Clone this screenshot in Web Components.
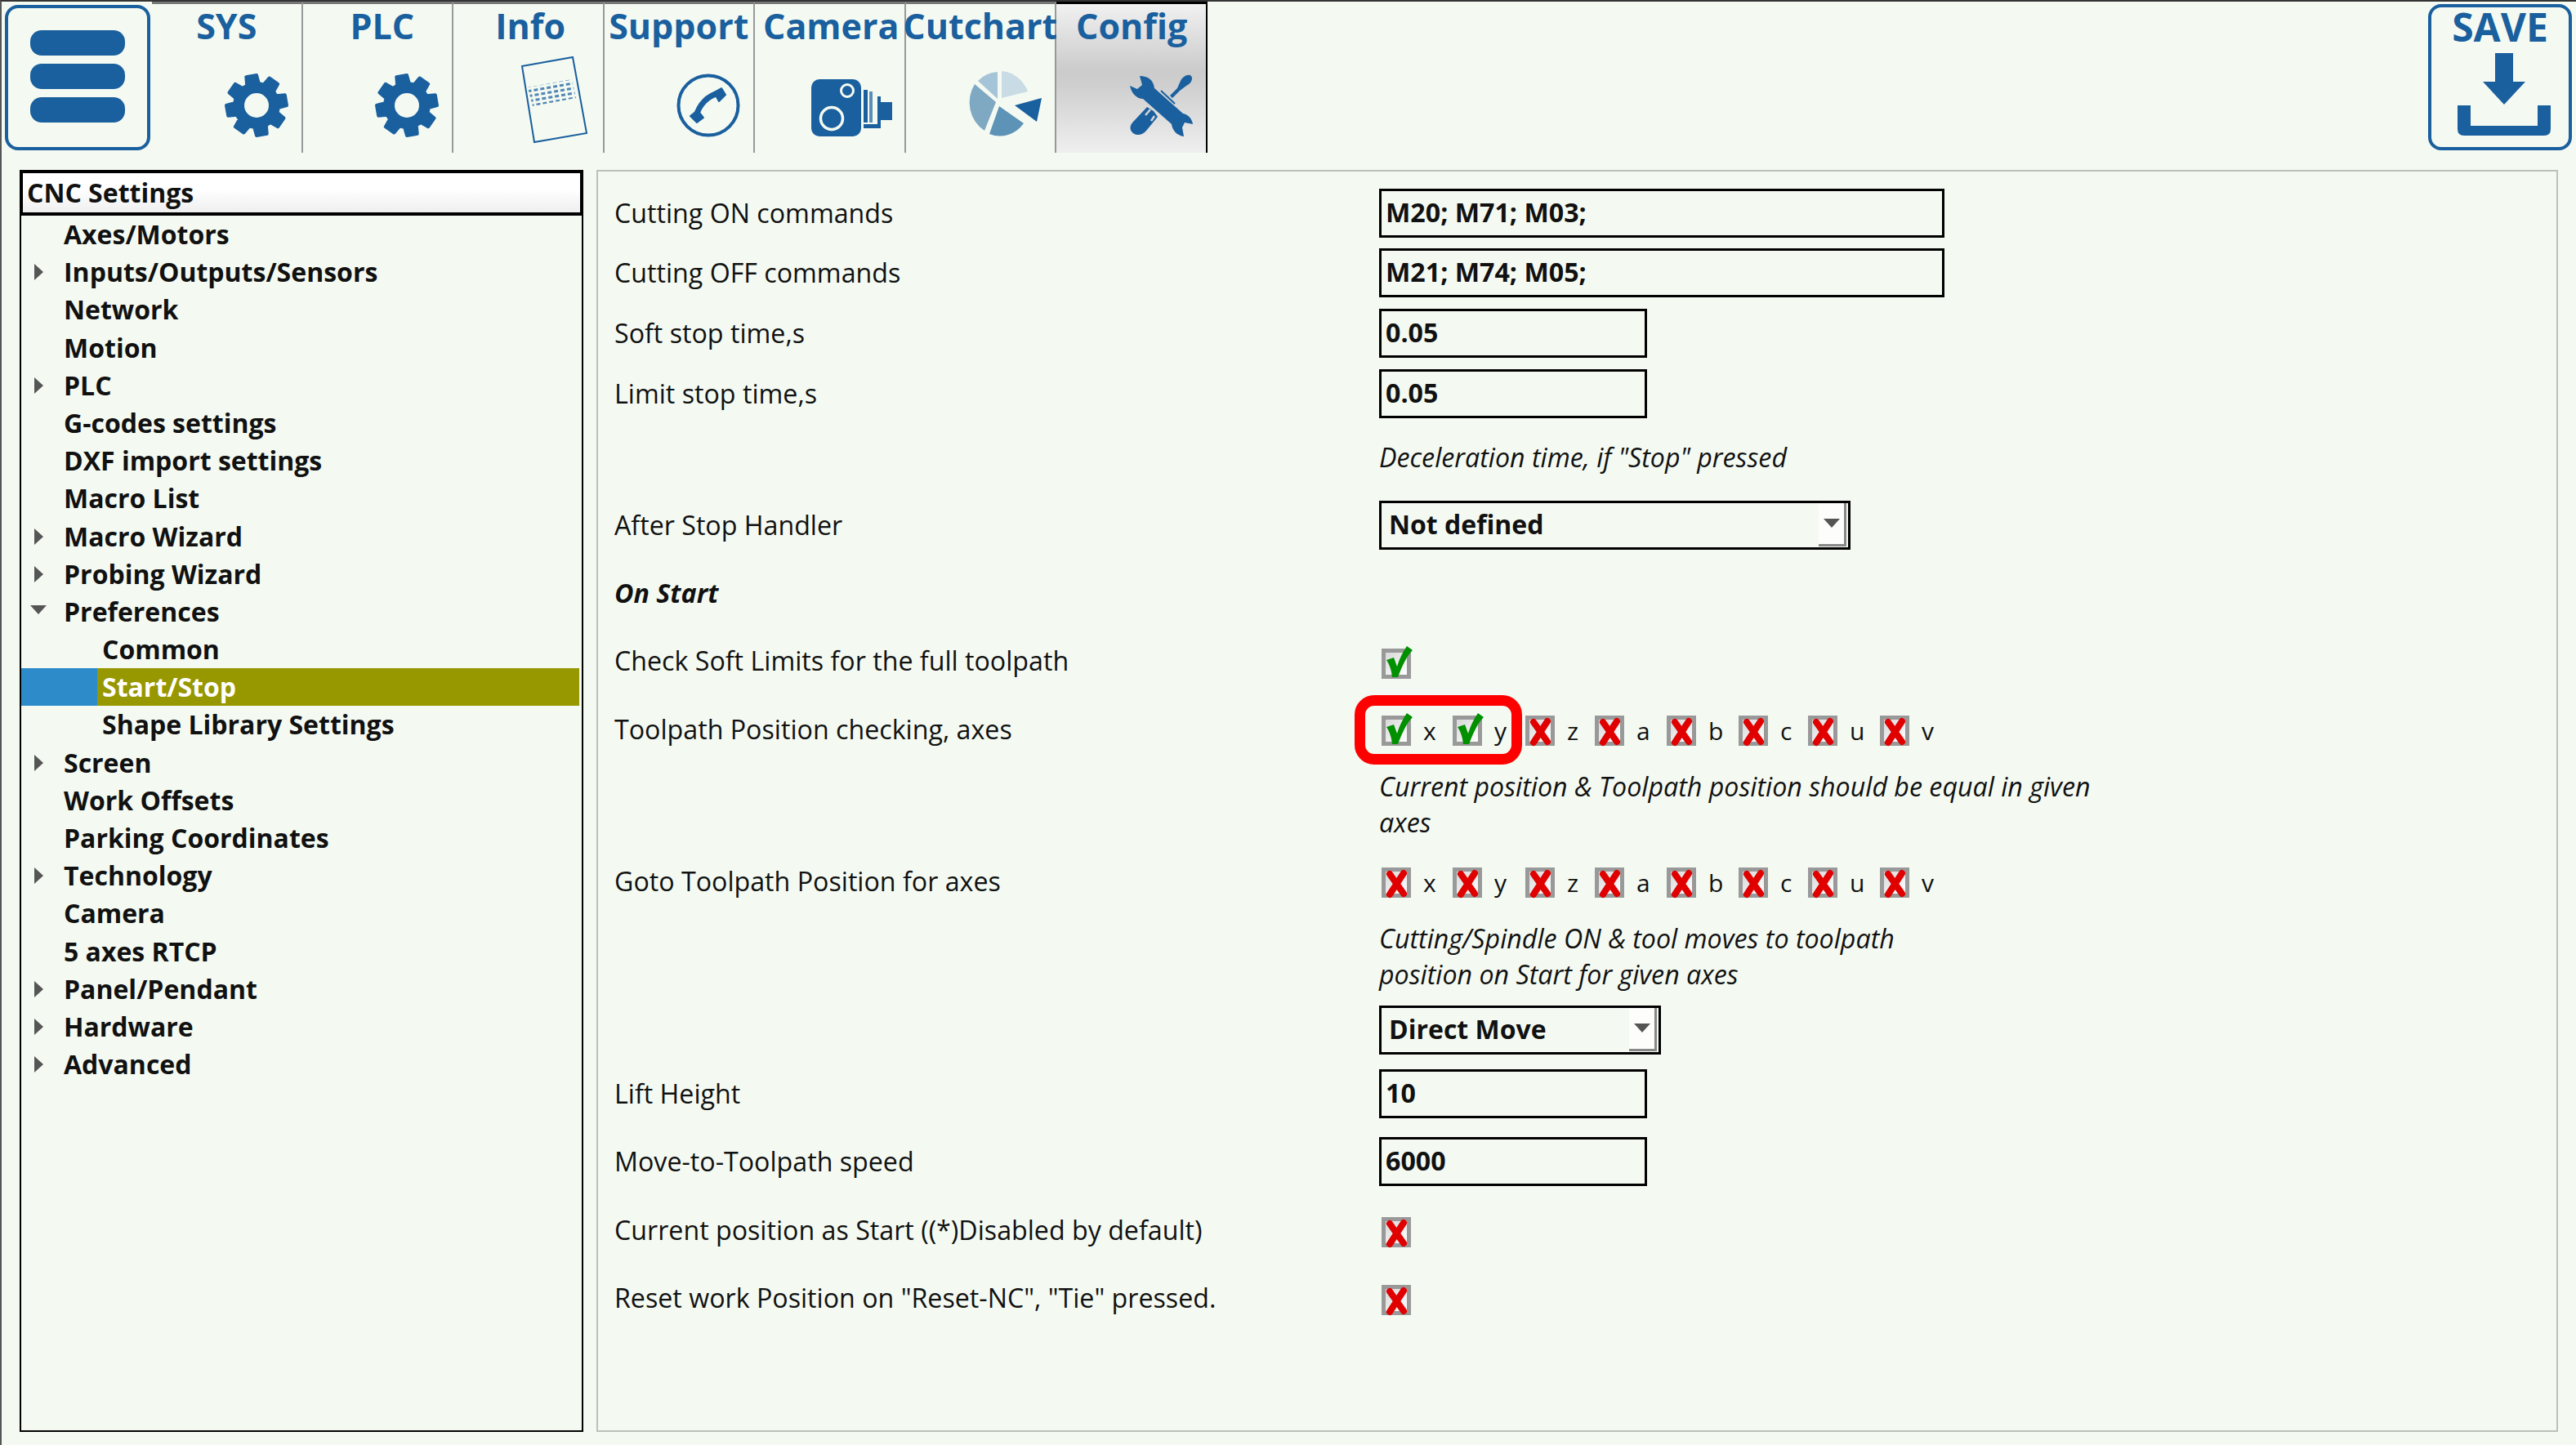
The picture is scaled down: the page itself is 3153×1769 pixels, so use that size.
<!DOCTYPE html>
<html>
<head>
<meta charset="utf-8">
<title>CNC Settings</title>
<style>
  html,body{margin:0;padding:0;background:#f4faf2;}
  body{width:3153px;height:1769px;overflow:hidden;font-family:"Open Sans",sans-serif;color:#111;}
</style>
</head>
<body>
<cnc-app>
  <tool-bar slot="top">
    <menu-button></menu-button>
    <nav-tab label="SYS" icon="gear"></nav-tab>
    <nav-tab label="PLC" icon="gear" dx="6"></nav-tab>
    <nav-tab label="Info" icon="info" dx="3"></nav-tab>
    <nav-tab label="Support" icon="phone"></nav-tab>
    <nav-tab label="Camera" icon="camera" dx="2"></nav-tab>
    <nav-tab label="Cutchart" icon="pie"></nav-tab>
    <nav-tab label="Config" icon="tools" dx="1" active></nav-tab>
    <save-button slot="end"></save-button>
  </tool-bar>

  <tree-view slot="left" heading="CNC Settings">
    <tree-item>Axes/Motors</tree-item>
    <tree-item arrow="right">Inputs/Outputs/Sensors</tree-item>
    <tree-item>Network</tree-item>
    <tree-item>Motion</tree-item>
    <tree-item arrow="right">PLC</tree-item>
    <tree-item>G-codes settings</tree-item>
    <tree-item>DXF import settings</tree-item>
    <tree-item>Macro List</tree-item>
    <tree-item arrow="right">Macro Wizard</tree-item>
    <tree-item arrow="right">Probing Wizard</tree-item>
    <tree-item arrow="down">Preferences</tree-item>
    <tree-item level="2">Common</tree-item>
    <tree-item level="2" selected>Start/Stop</tree-item>
    <tree-item level="2">Shape Library Settings</tree-item>
    <tree-item arrow="right">Screen</tree-item>
    <tree-item>Work Offsets</tree-item>
    <tree-item>Parking Coordinates</tree-item>
    <tree-item arrow="right">Technology</tree-item>
    <tree-item>Camera</tree-item>
    <tree-item>5 axes RTCP</tree-item>
    <tree-item arrow="right">Panel/Pendant</tree-item>
    <tree-item arrow="right">Hardware</tree-item>
    <tree-item arrow="right">Advanced</tree-item>
  </tree-view>

  <settings-panel slot="right">
    <form-row label="Cutting ON commands" h="59"><text-field wide>M20; M71; M03;</text-field></form-row>
    <form-row label="Cutting OFF commands" gap="14" h="59"><text-field wide>M21; M74; M05;</text-field></form-row>
    <form-row label="Soft stop time,s" gap="15" h="59"><text-field>0.05</text-field></form-row>
    <form-row label="Limit stop time,s" gap="15" h="60"><text-field>0.05</text-field></form-row>
    <form-row gap="26" h="44"><note-text>Deceleration time, if "Stop" pressed</note-text></form-row>
    <form-row label="After Stop Handler" gap="31" h="60"><drop-select w="577">Not defined</drop-select></form-row>
    <form-row label="On Start" heading gap="31" h="44"></form-row>
    <form-row label="Check Soft Limits for the full toolpath" gap="39" h="42" end><check-box checked></check-box></form-row>
    <form-row label="Toolpath Position checking, axes" gap="42" h="40" end><axis-row checked="xy" mark></axis-row></form-row>
    <form-row gap="30" h="88"><note-text>Current position &amp; Toolpath position should be equal in given<br>axes</note-text></form-row>
    <form-row label="Goto Toolpath Position for axes" gap="28" h="41" end><axis-row></axis-row></form-row>
    <form-row gap="29" h="88"><note-text>Cutting/Spindle ON &amp; tool moves to toolpath<br>position on Start for given axes</note-text></form-row>
    <form-row gap="16" h="60"><drop-select w="345">Direct Move</drop-select></form-row>
    <form-row label="Lift Height" gap="18" h="60"><text-field>10</text-field></form-row>
    <form-row label="Move-to-Toolpath speed" gap="23" h="60"><text-field>6000</text-field></form-row>
    <form-row label="Current position as Start ((*)Disabled by default)" gap="32" h="42" end><check-box style="margin-bottom:1px"></check-box></form-row>
    <form-row label="Reset work Position on &quot;Reset-NC&quot;, &quot;Tie&quot; pressed." gap="41" h="41" end><check-box style="margin-bottom:1px"></check-box></form-row>
  </settings-panel>
</cnc-app>

<script>
const BLUE = '#1a5f9e';
const BG = '#f4faf2';

// gear outline, 8 teeth, around 40,40
function gearPath() {
  const pts = [];
  for (let i = 0; i < 8; i++) {
    const a = -100 + i * 45;
    [[a - 16, 27], [a - 10, 37], [a + 10, 37], [a + 16, 27]].forEach(([d, r]) => {
      const t = d * Math.PI / 180;
      pts.push((40 + r * Math.cos(t)).toFixed(1) + ' ' + (40 + r * Math.sin(t)).toFixed(1));
    });
  }
  return 'M' + pts.join('L') + 'Z';
}

const ICONS = {
  gear: {w: 80, h: 80, r: 15, b: 18, svg: `
    <path d="${gearPath()}" fill="${BLUE}" stroke="${BLUE}" stroke-width="4" stroke-linejoin="round"/>
    <circle cx="40" cy="40" r="15" fill="${BG}"/>`},
  info: {w: 81, h: 106, r: 19, b: 12, svg: `
    <defs><pattern id="dots" width="8" height="6" patternUnits="userSpaceOnUse" patternTransform="rotate(-10)">
      <rect width="5" height="3" fill="${BLUE}" opacity=".75"/></pattern></defs>
    <polygon points="1,12 63,1 80,94 16,105" fill="none" stroke="${BLUE}" stroke-width="2"/>
    <polygon points="8,38 62,28 67,51 14,61" fill="url(#dots)"/>`},
  phone: {w: 78, h: 78, r: 16, b: 19, svg: `
    <circle cx="39" cy="39" r="36.5" fill="none" stroke="${BLUE}" stroke-width="4"/>
    <path d="M52 24C38 27 28 38 24 52" fill="none" stroke="${BLUE}" stroke-width="7"/>
    <path d="M46 23L55 18L60 26L52 34Z M17 52L26 45L33 54L25 60Z" fill="${BLUE}" stroke="${BLUE}" stroke-width="2" stroke-linejoin="round"/>`},
  camera: {w: 99, h: 70, r: 15, b: 20, svg: `
    <rect width="61" height="70" rx="10" fill="${BLUE}"/>
    <circle cx="25" cy="48" r="13.5" fill="${BLUE}" stroke="${BG}" stroke-width="3.5"/>
    <circle cx="44" cy="14" r="7.5" fill="${BLUE}" stroke="${BG}" stroke-width="3"/>
    <rect x="64" y="13" width="5" height="40" fill="${BLUE}"/>
    <rect x="71" y="15" width="4" height="38" fill="${BLUE}" opacity=".7"/>
    <rect x="64" y="55" width="21" height="5" fill="${BLUE}"/>
    <rect x="81" y="21" width="4" height="36" fill="${BLUE}"/>
    <rect x="85" y="28" width="14" height="22" fill="${BLUE}"/>`},
  pie: {w: 94, h: 80, r: 15, b: 20, svg: `
    <path d="M44 0A37 40 0 0 1 76 25L44 33Z" fill="#c9dbe4"/>
    <path d="M39 1A37 40 0 0 0 15 12L39 34Z" fill="#a6c4d7"/>
    <path d="M11 16A37 40 0 0 0 23 73L37 38Z" fill="#7fa8c3"/>
    <path d="M41 43L29 77A37 40 0 0 0 71 64Z" fill="#5e93b8"/>
    <path d="M60 42L93 33L87 62Z" fill="${BLUE}"/>`},
  tools: {w: 78, h: 78, r: 15, b: 19, svg: `
    <path d="M12 3C22 3 29 8 30 18L65 49C71 50 76 55 77 62L67 60L64 66L66 77C58 76 52 70 51 62L16 31C9 31 2 25 0 15L9 19L15 14Z" fill="${BLUE}"/>
    <path d="M49 27L58 18L62 9C65 3 72 0 75 3C78 7 74 13 69 15L61 21L52 30Z" fill="${BLUE}"/>
    <path d="M38 21L55 37" stroke="${BLUE}" stroke-width="2" fill="none"/>
    <path d="M21 41L29 46L34 53L20 70C15 76 6 77 2 71C-1 66 1 62 5 58Z" fill="${BLUE}"/>
    <path d="M19 51L25 44M26 58L30 52" stroke="#d6d6d6" stroke-width="2.5" fill="none"/>`}
};

class CncIcon extends HTMLElement {
  connectedCallback() {
    const ic = ICONS[this.getAttribute('name')];
    const root = this.shadowRoot || this.attachShadow({mode: 'open'});
    root.innerHTML = `<style>:host{display:block;line-height:0;margin:0 ${ic.r}px ${ic.b}px 0}svg{overflow:visible}</style>
      <svg width="${ic.w}" height="${ic.h}" viewBox="0 0 ${ic.w} ${ic.h}">${ic.svg}</svg>`;
  }
}
customElements.define('cnc-icon', CncIcon);

const appTpl = document.createElement('template');
appTpl.innerHTML = `
  <style>
    :host{display:grid;grid-template-columns:690px 1fr;grid-template-rows:185px 1fr;column-gap:16px;row-gap:21px;
      width:3153px;height:1769px;box-sizing:border-box;border-top:2px solid #333;border-left:2px solid #555;
      padding:0 22px 16px 22px;background:${BG}}
    ::slotted([slot=top]){grid-column:1 / -1;margin-left:-22px;margin-right:-22px}
  </style>
  <slot name="top"></slot><slot name="left"></slot><slot name="right"></slot>`;
customElements.define('cnc-app', class extends HTMLElement {
  constructor() { super(); this.attachShadow({mode: 'open'}).appendChild(appTpl.content.cloneNode(true)); }
});

const barTpl = document.createElement('template');
barTpl.innerHTML = `
  <style>
    :host{display:flex;align-items:stretch;height:185px}
    .end{margin-left:auto;display:block}
  </style>
  <slot></slot><div class="end"><slot name="end"></slot></div>`;
customElements.define('tool-bar', class extends HTMLElement {
  constructor() { super(); this.attachShadow({mode: 'open'}).appendChild(barTpl.content.cloneNode(true)); }
});

const menuTpl = document.createElement('template');
menuTpl.innerHTML = `
  <style>
    :host{display:block;box-sizing:border-box;width:178px;height:178px;margin:4px 2px 0 4px;
      border:4px solid ${BLUE};border-radius:16px;padding:27px 27px;flex:none}
    div{display:flex;flex-direction:column;gap:10px}
    i{display:block;height:31px;background:${BLUE};border-radius:14px}
  </style>
  <div><i></i><i></i><i></i></div>`;
customElements.define('menu-button', class extends HTMLElement {
  constructor() { super(); this.attachShadow({mode: 'open'}).appendChild(menuTpl.content.cloneNode(true)); }
});

customElements.define('nav-tab', class extends HTMLElement {
  connectedCallback() {
    const on = this.hasAttribute('active');
    const dx = +(this.getAttribute('dx') || 0);
    this.attachShadow({mode: 'open'}).innerHTML = `
      <style>
        :host{display:flex;flex-direction:column;align-items:flex-end;box-sizing:border-box;width:184.5px;flex:none;
          border-top:3px solid ${on ? '#000' : '#777'};border-right:2px solid ${on ? '#000' : '#999'};
          ${on ? 'background:linear-gradient(#f1f1f1 0,#cbcbcb 45%,#cfcfcf 55%,#efefef 100%);' : ''}}
        .t{align-self:center;margin:-2px 0 2px ${dx * 2}px;font:700 43px/58px "Open Sans",sans-serif;color:${BLUE};white-space:nowrap}
        cnc-icon{margin-top:auto}
      </style>
      <span class="t">${this.getAttribute('label')}</span>
      <cnc-icon name="${this.getAttribute('icon')}"></cnc-icon>`;
  }
});

const saveTpl = document.createElement('template');
saveTpl.innerHTML = `
  <style>
    :host{display:flex;flex-direction:column;align-items:center;box-sizing:border-box;width:176px;height:179px;
      margin:3px 5px 0 0;border:4px solid ${BLUE};border-radius:16px}
    span{font:700 48px/48px "Open Sans",sans-serif;color:${BLUE}}
    svg{display:block;margin:8px 0 0 10px}
  </style>
  <span>SAVE</span>
  <svg width="114" height="103" viewBox="0 0 114 103">
    <path d="M46 0H68V35H83L57 63L31 35H46Z" fill="${BLUE}"/>
    <path d="M0 64H16V89H98V64H114V93Q114 101 106 101H8Q0 101 0 93Z" fill="${BLUE}"/>
  </svg>`;
customElements.define('save-button', class extends HTMLElement {
  constructor() { super(); this.attachShadow({mode: 'open'}).appendChild(saveTpl.content.cloneNode(true)); }
});

customElements.define('tree-view', class extends HTMLElement {
  connectedCallback() {
    this.attachShadow({mode: 'open'}).innerHTML = `
      <style>
        :host{display:block;box-sizing:border-box;border:2px solid #000;height:100%}
        .h{box-sizing:border-box;height:56px;margin:-2px -2px 0;border:4px solid #000;padding-left:5px;
          background:linear-gradient(#fff 40%,#efefef);font:700 32px/48px "Open Sans",sans-serif;color:#111}
      </style>
      <div class="h">${this.getAttribute('heading')}</div><slot></slot>`;
  }
});

customElements.define('tree-item', class extends HTMLElement {
  connectedCallback() {
    const lvl = this.getAttribute('level') === '2' ? 2 : 1;
    const sel = this.hasAttribute('selected');
    const arrow = this.getAttribute('arrow');
    const glyph = arrow === 'right' ? '<path d="M14 0L25 10L14 20Z" fill="#555"/>'
      : arrow === 'down' ? '<path d="M9 5H29L19 16Z" fill="#555"/>' : '';
    this.attachShadow({mode: 'open'}).innerHTML = `
      <style>
        :host{display:flex;align-items:center;height:46.2px;margin-right:3px;font:700 32px/46px "Open Sans",sans-serif;color:#111;white-space:nowrap}
        .g{flex:none;width:${lvl === 2 ? 93 : 52}px;align-self:stretch;display:flex;align-items:center;${sel ? 'background:#2e8bc9;' : ''}}
        .x{flex:1;align-self:stretch;padding-left:${lvl === 2 ? 6 : 0}px;${sel ? 'background:#979700;color:#fff;' : ''}}
        svg{margin-top:${arrow === 'down' ? -6 : 0}px;margin-left:2px}
      </style>
      <div class="g"><svg width="44" height="20" viewBox="0 0 44 20">${glyph}</svg></div>
      <div class="x"><slot></slot></div>`;
  }
});

const panelTpl = document.createElement('template');
panelTpl.innerHTML = `
  <style>
    :host{display:block;box-sizing:border-box;border:2px solid #bcc0b8;padding:21px 0 0 20px;height:100%}
  </style>
  <slot></slot>`;
customElements.define('settings-panel', class extends HTMLElement {
  constructor() { super(); this.attachShadow({mode: 'open'}).appendChild(panelTpl.content.cloneNode(true)); }
});

customElements.define('form-row', class extends HTMLElement {
  connectedCallback() {
    const heading = this.hasAttribute('heading');
    this.attachShadow({mode: 'open'}).innerHTML = `
      <style>
        :host{display:grid;grid-template-columns:936px 1fr;align-items:center;
          height:${this.getAttribute('h')}px;margin-top:${this.getAttribute('gap') || 0}px;
          font:${heading ? 'italic 700' : '400'} 32.2px/44px "Open Sans",sans-serif;color:#111}
        .c{${this.hasAttribute('end') ? 'align-self:end;' : ''}min-width:0}
      </style>
      <div>${this.getAttribute('label') || ''}</div><div class="c"><slot></slot></div>`;
  }
});

customElements.define('text-field', class extends HTMLElement {
  connectedCallback() {
    this.attachShadow({mode: 'open'}).innerHTML = `
      <style>
        :host{display:block;box-sizing:border-box;width:${this.hasAttribute('wide') ? 692 : 328}px;height:60px;
          border:3px solid #000;padding-left:5px;font:700 32.2px/52px "Open Sans",sans-serif;color:#111}
      </style><slot></slot>`;
  }
});

customElements.define('drop-select', class extends HTMLElement {
  connectedCallback() {
    this.attachShadow({mode: 'open'}).innerHTML = `
      <style>
        :host{display:flex;box-sizing:border-box;width:${this.getAttribute('w')}px;height:60px;border:3px solid #000;
          padding-left:9px;font:700 32px/51px "Open Sans",sans-serif;color:#111;justify-content:space-between}
        .b{box-sizing:border-box;width:34px;height:53px;margin-right:2px;background:#fdfefc;border-right:3px solid #888;border-bottom:3px solid #888;
          display:flex;align-items:center;justify-content:center}
      </style>
      <span><slot></slot></span>
      <div class="b"><svg width="20" height="12" viewBox="0 0 20 12"><path d="M0 0H20L10 11Z" fill="#555"/></svg></div>`;
  }
});

customElements.define('note-text', class extends HTMLElement {
  connectedCallback() {
    this.attachShadow({mode: 'open'}).innerHTML = `
      <style>:host{display:block;font:italic 400 32.2px/44px "Open Sans",sans-serif;color:#111;white-space:nowrap}</style><slot></slot>`;
  }
});

customElements.define('check-box', class extends HTMLElement {
  connectedCallback() {
    const on = this.hasAttribute('checked');
    const mark = on
      ? `<path d="M6 14L15 11L19 22C22 12 26 4 31 -3L38 2C30 10 25 22 20 35L13 35C12 26 10 20 6 14Z" fill="#009000"/>`
      : `<path d="M10 8L27 32M27 7L10 33" fill="none" stroke="#e00000" stroke-width="8" stroke-linecap="round"/>`;
    this.attachShadow({mode: 'open'}).innerHTML = `
      <style>
        :host{display:block;position:relative;box-sizing:border-box;width:36px;height:37px;margin-left:3px;flex:none;
          border:5px solid #999;background:linear-gradient(135deg,#d8d8d8,#fff)}
        svg{position:absolute;left:-5px;top:-5px;overflow:visible}
      </style>
      <svg width="36" height="37" viewBox="0 0 36 37">${mark}</svg>`;
  }
});

// letter cells are fixed width, the reference columns don't follow the glyph widths
const AXIS_W = {x: 15, y: 17, z: 13, a: 16, b: 16, c: 13, u: 16, v: 16};

customElements.define('axis-row', class extends HTMLElement {
  connectedCallback() {
    const on = this.getAttribute('checked') || '';
    const cells = [...'xyzabcuv'].map(a => `
      <check-box ${on.includes(a) ? 'checked' : ''}></check-box><span class="l" style="width:${AXIS_W[a]}px">${a}</span>`).join('');
    this.attachShadow({mode: 'open'}).innerHTML = `
      <style>
        :host{display:flex;position:relative;align-items:center;height:37px;margin-bottom:2px;font:400 30px/37px "Open Sans",sans-serif;color:#111}
        .l{display:block;flex:none;margin:0 18px 0 15px}
        .m{position:absolute;left:-30px;top:-25px;box-sizing:border-box;width:205px;height:85px;
          border:13px solid #f00;border-radius:24px}
      </style>${cells}${this.hasAttribute('mark') ? '<div class="m"></div>' : ''}`;
  }
});
</script>
</body>
</html>
